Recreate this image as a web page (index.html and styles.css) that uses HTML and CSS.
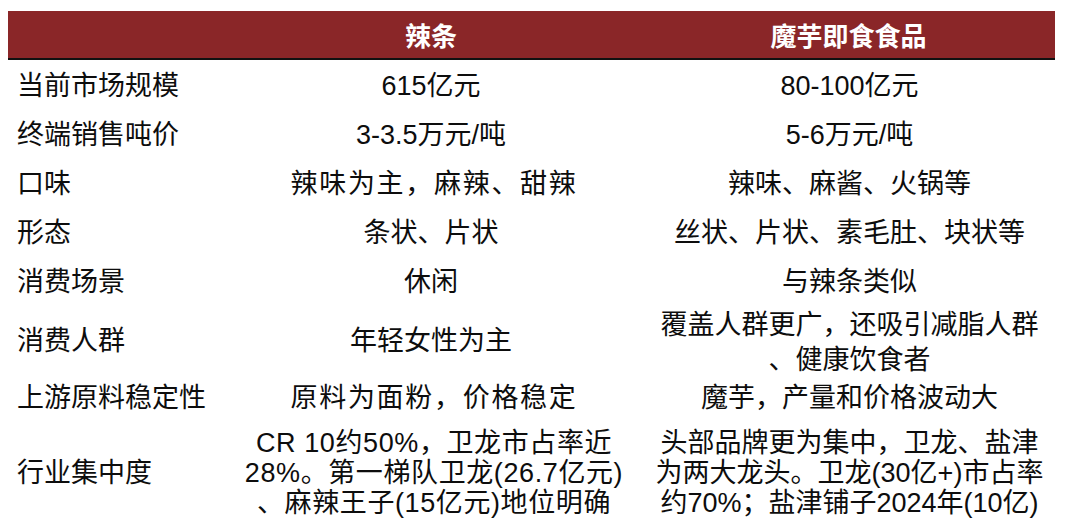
FILE: index.html
```html
<!DOCTYPE html>
<html lang="zh-CN">
<head>
<meta charset="utf-8">
<link rel="stylesheet" href="styles.css">
</head>
<body>
<div class="table">
  <div class="head"></div>
  <div class="head">辣条</div>
  <div class="head head-last">魔芋即食食品</div>

  <div class="label">当前市场规模</div>
  <div class="cell">615亿元</div>
  <div class="cell c3">80-100亿元</div>

  <div class="label">终端销售吨价</div>
  <div class="cell">3-3.5万元/吨</div>
  <div class="cell c3">5-6万元/吨</div>

  <div class="label">口味</div>
  <div class="cell wide">辣味为主，麻辣、甜辣</div>
  <div class="cell c3">辣味、麻酱、火锅等</div>

  <div class="label">形态</div>
  <div class="cell">条状、片状</div>
  <div class="cell c3">丝状、片状、素毛肚、块状等</div>

  <div class="label">消费场景</div>
  <div class="cell">休闲</div>
  <div class="cell c3">与辣条类似</div>

  <div class="label">消费人群</div>
  <div class="cell">年轻女性为主</div>
  <div class="cell c3 tall">覆盖人群更广，还吸引减脂人群<br>、健康饮食者</div>

  <div class="label">上游原料稳定性</div>
  <div class="cell wide">原料为面粉，价格稳定</div>
  <div class="cell c3">魔芋，产量和价格波动大</div>

  <div class="label label-multi">行业集中度</div>
  <div class="cell multi spaced">CR 10约50%，卫龙市占率近<br>28%。第一梯队卫龙(26.7亿元)<br>、麻辣王子(15亿元)地位明确</div>
  <div class="cell c3 multi">头部品牌更为集中，卫龙、盐津<br>为两大龙头。卫龙(30亿+)市占率<br>约70%；盐津铺子2024年(10亿)</div>
</div>
</body>
</html>
```

FILE: styles.css
```css
html, body {
  margin: 0;
  padding: 0;
  background: #ffffff;
}

body {
  font-family: "Liberation Sans", "Noto Sans CJK SC", sans-serif;
  color: #0d0d0d;
  font-size: 27px;
  overflow: hidden;
}

.table {
  margin: 11px 0 0 10px;
  width: 1045px;
  display: grid;
  grid-template-columns: 210px 422px 413px;
  grid-template-rows: 49px 49px 49px 49px 49px 49px 69px 45px 104px;
}

.head {
  background: #8a2628;
  color: #ffffff;
  font-weight: 700;
  font-size: 26px;
  display: flex;
  align-items: center;
  justify-content: center;
  border-bottom: 2px solid #111111;
}

.head:first-child {
  margin-left: -2px;
}

.label {
  display: flex;
  align-items: center;
  padding-left: 7px;
  padding-top: 3px;
  white-space: nowrap;
  line-height: 31px;
}

.label-multi {
  padding-top: 5px;
}

.cell {
  display: flex;
  align-items: center;
  justify-content: center;
  text-align: center;
  white-space: nowrap;
  line-height: 31px;
  padding-top: 3px;
}

.c3 {
  padding-left: 2px;
}

.wide {
  letter-spacing: 1.7px;
  padding-left: 6px;
}

.spaced {
  letter-spacing: 0.6px;
  padding-left: 6px;
}

.tall {
  line-height: 35px;
  padding-top: 7px;
}

.multi {
  line-height: 30px;
  padding-top: 3px;
}
```
